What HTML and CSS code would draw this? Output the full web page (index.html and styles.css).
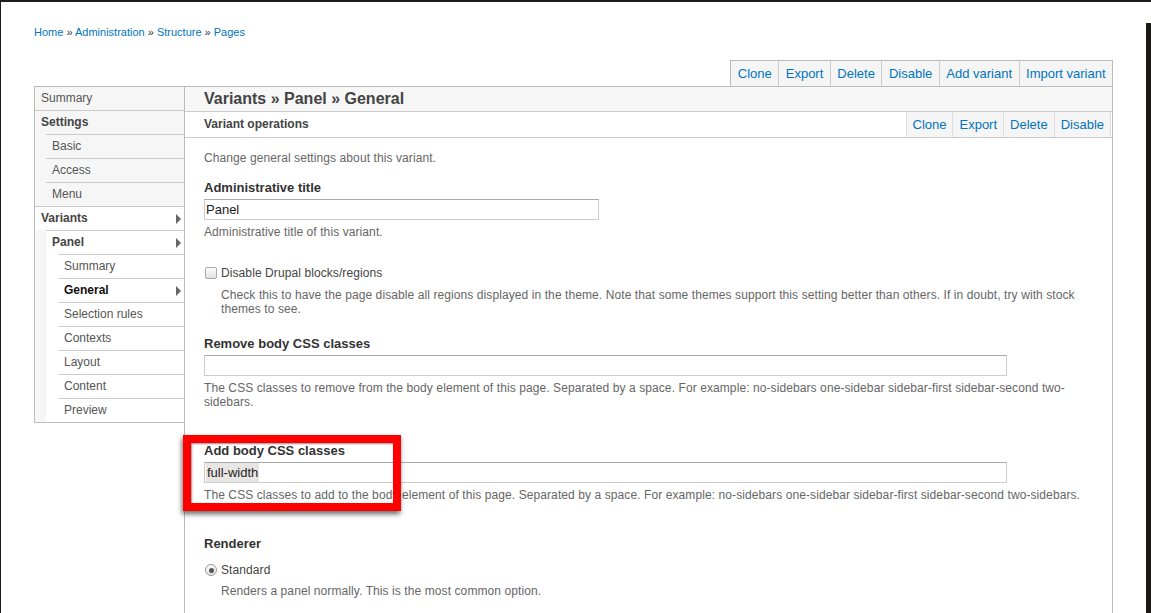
FILE: index.html
```html
<!DOCTYPE html>
<html lang="en">
<head>
<meta charset="utf-8">
<title>Variants » Panel » General</title>
<link rel="stylesheet" href="styles.css">
</head>
<body>
<div class="page">
  <p class="breadcrumb"><a href="#">Home</a> » <a href="#">Administration</a> » <a href="#">Structure</a> » <a href="#">Pages</a></p>

  <div class="wrap">
    <ul class="ops ops-top">
      <li class="op">Clone</li>
      <li class="op">Export</li>
      <li class="op">Delete</li>
      <li class="op">Disable</li>
      <li class="op">Add variant</li>
      <li class="op">Import variant</li>
    </ul>

    <div class="layout">
      <nav class="sidebar">
        <ul class="nav">
          <li><a class="nav-link">Summary</a></li>
          <li><a class="nav-link strong">Settings</a>
            <ul class="nav nav-sub">
              <li><a class="nav-link">Basic</a></li>
              <li><a class="nav-link">Access</a></li>
              <li><a class="nav-link">Menu</a></li>
            </ul>
          </li>
          <li><a class="nav-link strong active">Variants<span class="arrow"></span></a>
            <ul class="nav nav-sub">
              <li class="trail"><a class="nav-link strong active">Panel<span class="arrow"></span></a>
                <ul class="nav nav-sub">
                  <li><a class="nav-link">Summary</a></li>
                  <li><a class="nav-link strong current active">General<span class="arrow"></span></a></li>
                  <li><a class="nav-link">Selection rules</a></li>
                  <li><a class="nav-link">Contexts</a></li>
                  <li><a class="nav-link">Layout</a></li>
                  <li><a class="nav-link">Content</a></li>
                  <li><a class="nav-link">Preview</a></li>
                </ul>
              </li>
            </ul>
          </li>
        </ul>
      </nav>

      <main class="main">
        <div class="main-head">
          <h1 class="main-title">Variants » Panel » General</h1>
        </div>
        <div class="ops-row">
          <h2 class="ops-title">Variant operations</h2>
          <ul class="ops ops-inline">
            <li class="op">Clone</li>
            <li class="op">Export</li>
            <li class="op">Delete</li>
            <li class="op">Disable</li>
          </ul>
        </div>

        <div class="content">
          <p class="intro">Change general settings about this variant.</p>

          <div class="item item-title">
            <span class="label">Administrative title</span>
            <div class="field field-short">Panel</div>
            <p class="desc">Administrative title of this variant.</p>
          </div>

          <div class="item item-check">
            <div class="choice"><span class="checkbox"></span><span>Disable Drupal blocks/regions</span></div>
            <p class="desc desc-indent">Check this to have the page disable all regions displayed in the theme. Note that some themes support this setting better than others. If in doubt, try with stock themes to see.</p>
          </div>

          <div class="item item-remove">
            <span class="label">Remove body CSS classes</span>
            <div class="field field-long"></div>
            <p class="desc">The CSS classes to remove from the body element of this page. Separated by a space. For example: no-sidebars one-sidebar sidebar-first sidebar-second two-sidebars.</p>
          </div>

          <div class="item item-add">
            <span class="label">Add body CSS classes</span>
            <div class="field field-long"><span class="selected">full-width</span></div>
            <p class="desc">The CSS classes to add to the body element of this page. Separated by a space. For example: no-sidebars one-sidebar sidebar-first sidebar-second two-sidebars.</p>
          </div>

          <div class="item item-renderer">
            <span class="label">Renderer</span>
            <div class="choice choice-radio"><span class="radio"><span class="radio-dot"></span></span><span>Standard</span></div>
            <p class="desc desc-indent desc-radio">Renders a panel normally. This is the most common option.</p>
          </div>
        </div>
      </main>
    </div>
  </div>
</div>

<div class="callout"></div>
<div class="edge"></div>
</body>
</html>
```

FILE: styles.css
```css
html {
  overflow: hidden;
}

body {
  margin: 0;
  position: relative;
  background: #fff;
  color: #333;
  font-family: "Liberation Sans", Arial, sans-serif;
}

.page {
  min-height: 613px;
  box-sizing: border-box;
  border-top: 2px solid #1d1d1d;
  border-left: 1px solid #1d1d1d;
  padding: 23px 0 0 33px;
}

.breadcrumb {
  margin: 0;
  font-size: 11px;
  line-height: 14px;
  color: #333;
}

.breadcrumb a {
  color: #0074bd;
  text-decoration: none;
}

.wrap {
  width: 1079px;
  margin-top: 21px;
}

/* operation buttons */
.ops {
  display: flex;
  list-style: none;
  margin: 0;
  padding: 0;
}

.ops-top {
  justify-content: flex-end;
}

.op {
  border-left: 1px solid #ccc;
  background: #f5f5f5;
  color: #0074bd;
  font-size: 13px;
  padding: 0 6.5px;
}

.op:last-child {
  border-right: 1px solid #ccc;
}

.ops-top .op {
  border-top: 1px solid #bbb;
  line-height: 25px;
}

.ops-top .op:first-child {
  border-left-color: #bbb;
}

.ops-top .op:last-child {
  border-right-color: #bbb;
}

/* layout */
.layout {
  display: flex;
  align-items: flex-start;
}

.sidebar {
  width: 150px;
  box-sizing: border-box;
  border: 1px solid #bbb;
  border-right: 0;
  background: #f6f6f6;
}

.nav {
  list-style: none;
  margin: 0;
  padding: 0;
}

.nav-sub {
  margin-left: 11px;
}

.nav-sub .nav-sub {
  margin-left: 12px;
}

.trail {
  background: #fff;
}

.nav-link {
  display: flex;
  justify-content: space-between;
  align-items: center;
  height: 22px;
  padding: 0 3px 1px 6px;
  border-top: 1px solid #ccc;
  font-size: 12px;
  color: #555;
}

.sidebar > .nav > li:first-child > .nav-link {
  border-top: 0;
}

.nav-link.strong {
  font-weight: bold;
  color: #444;
}

.nav-link.active {
  background: #fff;
}

.nav-link.current {
  color: #111;
}

.arrow {
  width: 0;
  height: 0;
  margin-top: 1px;
  border-left: 5px solid #666;
  border-top: 5px solid transparent;
  border-bottom: 5px solid transparent;
}

/* main panel */
.main {
  width: 929px;
  box-sizing: border-box;
  border: 1px solid #bbb;
  border-bottom: 0;
}

.main-head {
  height: 24px;
  background: #f7f7f7;
  border-bottom: 1px solid #ccc;
  padding-left: 19px;
}

.main-title {
  margin: 0;
  font-size: 16px;
  line-height: 23px;
  font-weight: bold;
  color: #444;
}

.ops-row {
  display: flex;
  justify-content: space-between;
  height: 25px;
  border-bottom: 1px solid #ccc;
  padding: 0 1px 0 19px;
}

.ops-title {
  margin: 0;
  font-size: 12px;
  line-height: 25px;
  font-weight: bold;
  color: #444;
}

.ops-inline .op {
  line-height: 25px;
  padding: 0 6px;
  border-color: #ddd;
}

/* form */
.content {
  padding: 13px 20px 24px 19px;
}

.intro,
.desc {
  margin: 0;
  font-size: 12px;
  line-height: 14px;
  letter-spacing: 0.09px;
  color: #666;
}

.label {
  display: block;
  font-size: 13px;
  line-height: 16px;
  font-weight: bold;
  color: #333;
}

.field {
  margin-top: 3px;
  height: 21px;
  box-sizing: border-box;
  border: 1px solid #ccc;
  border-top-color: #aaa;
  padding: 0 1px;
  font-size: 13px;
  line-height: 19px;
  color: #222;
}

.field-short {
  width: 395px;
}

.field-long {
  width: 803px;
}

.selected {
  display: inline-block;
  background: #e8e6e2;
  padding: 0 1px;
}

.desc {
  margin-top: 5px;
}

.item-title {
  margin-top: 15px;
}

.item-check {
  margin-top: 27px;
}

.item-remove {
  margin-top: 20px;
}

.item-add {
  margin-top: 34px;
}

.item-renderer {
  margin-top: 34px;
}

.choice {
  display: flex;
  align-items: center;
  gap: 4px;
  font-size: 12px;
  line-height: 14px;
  letter-spacing: 0.09px;
  color: #444;
}

.choice-radio {
  margin-top: 11px;
}

.checkbox {
  width: 12px;
  height: 12px;
  box-sizing: border-box;
  margin-left: 1px;
  border: 1px solid #aaa;
  border-radius: 2px;
  background: linear-gradient(#fdfdfd, #e2e2e2);
}

.radio {
  display: flex;
  align-items: center;
  justify-content: center;
  width: 12px;
  height: 12px;
  box-sizing: border-box;
  margin-left: 1px;
  border: 1px solid #999;
  border-radius: 50%;
  background: linear-gradient(#fdfdfd, #e4e4e4);
}

.radio-dot {
  width: 5px;
  height: 5px;
  border-radius: 50%;
  background: #555;
}

.desc-indent {
  padding-left: 17px;
  margin-top: 8px;
}

.desc-radio {
  margin-top: 7px;
}

/* screenshot annotation and frame decoration */
.callout {
  position: absolute;
  left: 183px;
  top: 435px;
  width: 218px;
  height: 76px;
  box-sizing: border-box;
  border: 8px solid #ff0000;
  box-shadow: -1px 3px 5px rgba(0, 0, 0, 0.6), inset 1px 1px 2px rgba(0, 0, 0, 0.45);
}

.edge {
  position: absolute;
  left: 1146px;
  top: 23px;
  width: 5px;
  height: 590px;
  background: #1c1a17;
}
```
